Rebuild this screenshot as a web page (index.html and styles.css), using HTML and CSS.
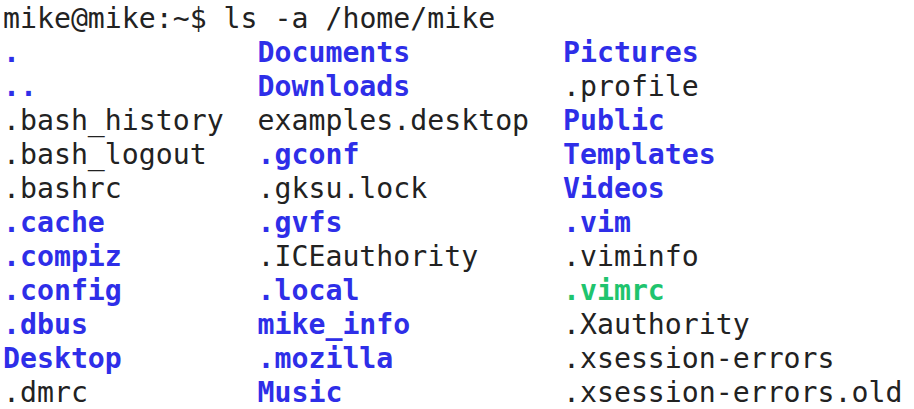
FILE: index.html
```html
<!DOCTYPE html>
<html>
<head>
<meta charset="utf-8">
<link rel="stylesheet" href="styles.css">
</head>
<body>
<div class="term">
  <div class="prompt">mike@mike:~$ ls -a /home/mike</div>
  <div class="listing">
    <span class="dir">.</span><span class="dir">Documents</span><span class="dir">Pictures</span>
    <span class="dir">..</span><span class="dir">Downloads</span><span>.profile</span>
    <span>.bash_history</span><span>examples.desktop</span><span class="dir">Public</span>
    <span>.bash_logout</span><span class="dir">.gconf</span><span class="dir">Templates</span>
    <span>.bashrc</span><span>.gksu.lock</span><span class="dir">Videos</span>
    <span class="dir">.cache</span><span class="dir">.gvfs</span><span class="dir">.vim</span>
    <span class="dir">.compiz</span><span>.ICEauthority</span><span>.viminfo</span>
    <span class="dir">.config</span><span class="dir">.local</span><span class="exec">.vimrc</span>
    <span class="dir">.dbus</span><span class="dir">mike_info</span><span>.Xauthority</span>
    <span class="dir">Desktop</span><span class="dir">.mozilla</span><span>.xsession-errors</span>
    <span>.dmrc</span><span class="dir">Music</span><span>.xsession-errors.old</span>
  </div>
</div>
</body>
</html>
```

FILE: styles.css
```css
html, body {
  margin: 0;
  padding: 0;
  background: #ffffff;
}
.term {
  font-family: "DejaVu Sans Mono", monospace;
  font-size: 28.2px;
  line-height: 34px;
  color: #222222;
  padding: 2px 0 0 3px;
}
.prompt,
.listing span {
  white-space: pre;
}
.listing {
  display: grid;
  grid-template-columns: 15ch 18ch auto;
}
.dir {
  color: #2e2ee8;
  font-weight: bold;
}
.exec {
  color: #1fc46e;
  font-weight: bold;
}
```
